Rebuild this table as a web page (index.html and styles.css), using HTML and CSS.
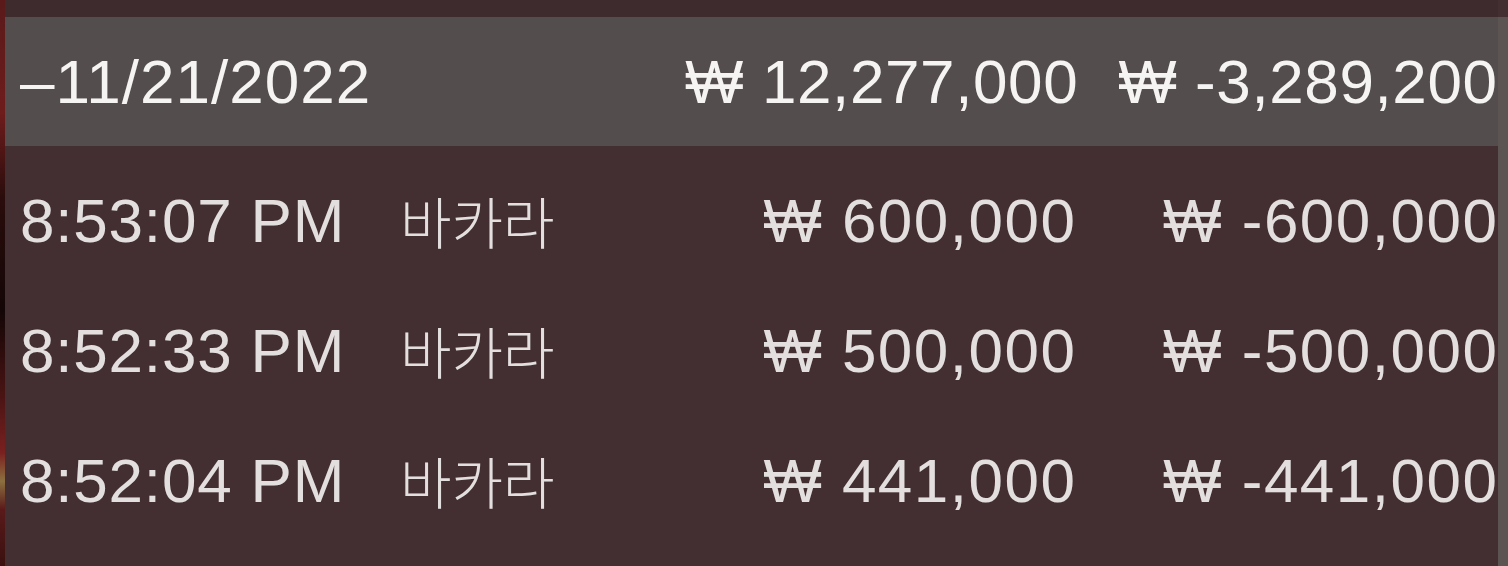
FILE: index.html
```html
<!DOCTYPE html>
<html lang="ko">
<head>
<meta charset="utf-8">
<title>History</title>
<link rel="stylesheet" href="styles.css">
</head>
<body>
<div class="frame">
  <div class="edge"></div>
  <div class="panel">
    <div class="topstrip"></div>
    <div class="grid header">
      <div class="date">–11/21/2022</div>
      <div class="num amount">₩ 12,277,000</div>
      <div class="num profit">₩ -3,289,200</div>
    </div>
    <div class="rows">
      <div class="grid row">
        <div class="time">8:53:07 PM</div>
        <div class="game">바카라</div>
        <div class="num amount">₩ 600,000</div>
        <div class="num profit">₩ -600,000</div>
      </div>
      <div class="grid row">
        <div class="time">8:52:33 PM</div>
        <div class="game">바카라</div>
        <div class="num amount">₩ 500,000</div>
        <div class="num profit">₩ -500,000</div>
      </div>
      <div class="grid row">
        <div class="time">8:52:04 PM</div>
        <div class="game">바카라</div>
        <div class="num amount">₩ 441,000</div>
        <div class="num profit">₩ -441,000</div>
      </div>
    </div>
  </div>
  <div class="scroll"></div>
</div>
</body>
</html>
```
FILE: styles.css
```css
html, body {
  margin: 0;
  padding: 0;
  width: 1508px;
  height: 566px;
  overflow: hidden;
  background: #432f31;
}
.frame {
  display: flex;
  height: 566px;
}
.edge {
  width: 5px;
  flex: none;
  background: linear-gradient(to bottom, #5a1a1a 0%, #6e1c1c 20%, #2a0c0c 35%, #140606 55%, #4a1414 70%, #7a2020 80%, #8c7040 85%, #5a1a1a 90%, #3a1010 100%);
}
.panel {
  flex: 1;
  display: flex;
  flex-direction: column;
  font-family: "Liberation Sans", Arial, "Noto Sans CJK KR", sans-serif;
  font-size: 62px;
  color: #e4dfdf;
}
.topstrip {
  height: 17px;
  background: #3d2b2d;
}
.grid {
  display: grid;
  grid-template-columns: 380px 1fr 390px 422px;
  align-items: center;
  padding-left: 15px;
  padding-right: 1px;
  white-space: nowrap;
}
.header {
  height: 129px;
  background: #534d4e;
  color: #f6f3f3;
}
.date {
  grid-column: 1 / 3;
  letter-spacing: 1px;
}
.time {
  letter-spacing: 0.8px;
}
.rows {
  padding-top: 9px;
  display: flex;
  flex-direction: column;
}
.row {
  height: 130px;
}
.game {
  font-family: "Noto Sans CJK KR", sans-serif;
  font-size: 56px;
  font-weight: 300;
  line-height: 1;
}
.num {
  text-align: right;
  letter-spacing: 1.5px;
  margin-right: -1.5px;
}
.header .num {
  letter-spacing: 0.6px;
  margin-right: -0.6px;
}
.scroll {
  width: 10px;
  flex: none;
  margin-top: 17px;
  background: #5c5353;
}
```
